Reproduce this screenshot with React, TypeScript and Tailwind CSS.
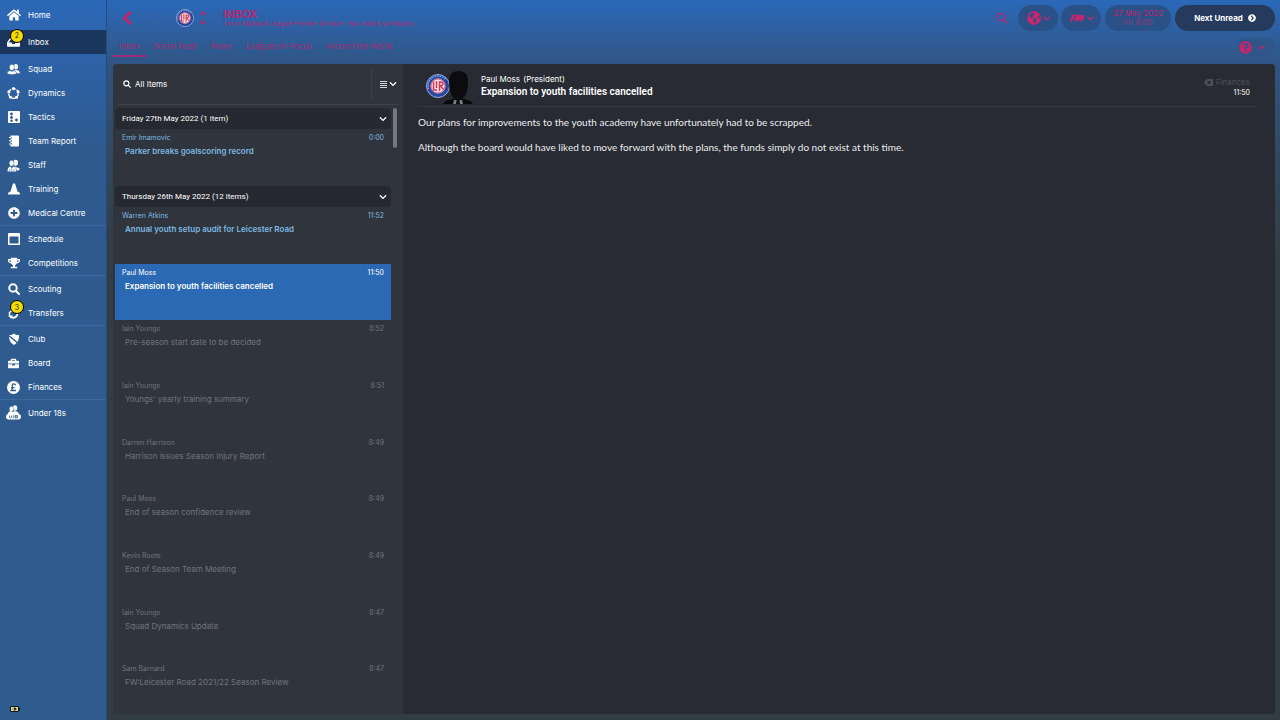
import type { ReactNode } from 'react'
import {
  FaBriefcase,
  FaChevronDown,
  FaGlobeAmericas,
  FaHome,
  FaInbox,
  FaPlusCircle,
  FaQuestionCircle,
  FaChevronCircleRight,
  FaTrophy,
} from 'react-icons/fa'

const Svg = ({ children, className = 'size-3' }: { children: ReactNode; className?: string }) => (
  <svg viewBox="0 0 24 24" className={className} fill="currentColor" aria-hidden="true">
    {children}
  </svg>
)

const Search = ({ className = 'size-3', width = 4 }: { className?: string; width?: number }) => (
  <Svg className={className}>
    <circle cx="10" cy="10" r="7.5" fill="none" stroke="currentColor" strokeWidth={width} />
    <path d="M15.5 15.5 22 22" stroke="currentColor" strokeWidth={width} strokeLinecap="round" />
  </Svg>
)

const ThinChevron = () => (
  <svg viewBox="0 0 14 9" className="h-[5px] w-[7px]" fill="none" stroke="currentColor" strokeWidth="2.500" aria-hidden="true">
    <path d="M1 1.500l6 5.500 6-5.500" />
  </svg>
)

const Squad = () => (
  <Svg className="size-[13px]">
    <ellipse cx="16.5" cy="7" rx="4" ry="5" />
    <path d="M14 13q9-1 10 6h-9z" />
    <ellipse cx="9" cy="8" rx="4.6" ry="5.8" stroke="#2d5c98" strokeWidth="1" />
    <path d="M0 20q0-5 5.500-6 3.500 3 7 0 5.500 1 5.500 6-9 3-18 0z" stroke="#2d5c98" strokeWidth="1" />
  </Svg>
)

const Dynamics = () => (
  <Svg className="size-[13px]">
    <circle cx="12" cy="12" r="9" fill="none" stroke="currentColor" strokeWidth="2.500" strokeDasharray="7.310 2" strokeDashoffset="-1" />
    <circle cx="12" cy="3" r="2.800" />
    <circle cx="3.500" cy="9" r="2.800" />
    <circle cx="20.500" cy="9" r="2.800" />
    <circle cx="6.500" cy="19" r="2.800" />
    <circle cx="17.500" cy="19" r="2.800" />
  </Svg>
)

const Tactics = () => (
  <Svg>
    <rect width="24" height="24" rx="2" />
    <g fill="#2e5a91">
      <circle cx="7" cy="6" r="2.800" />
      <circle cx="7" cy="13" r="2.800" />
      <circle cx="7" cy="19.500" r="2.500" />
      <circle cx="17" cy="18" r="2.800" />
    </g>
  </Svg>
)

const Report = () => (
  <Svg>
    <path d="M5 1h15q2 0 2 2v18q0 2-2 2H5v-4h3v-3H5v-3h3v-3H5V7h3V4H5z" />
    <path d="M2 5h5M2 11.500h5M2 18h5" stroke="currentColor" strokeWidth="2" />
  </Svg>
)

const Staff = () => (
  <Svg className="size-[13px]">
    <ellipse cx="16" cy="7" rx="4.500" ry="5.500" />
    <ellipse cx="8.500" cy="8" rx="4.500" ry="5.500" stroke="#2d5a91" />
    <path d="M1 23q0-8 5-9l3 3 3-3q5 1 5 9z" />
    <path d="M14 13l3 2q6 1 7 4l-5 3z" />
    <path d="M9 17v6M5 19v4M13 19v4" stroke="#2d5a91" />
  </Svg>
)

const Training = () => (
  <Svg>
    <path d="M10 1h4l5 16q4 1 5 4v2H0v-2q1-3 5-4z" />
  </Svg>
)

const Calendar = () => (
  <Svg>
    <path fillRule="evenodd" d="M2 0h20q2 0 2 2v20q0 2-2 2H2q-2 0-2-2V2q0-2 2-2zm1 7v14h18V7z" />
  </Svg>
)

const Transfer = () => (
  <Svg>
    <path d="M3 10v10M2 12l8-7" stroke="currentColor" strokeWidth="3" />
    <path d="M6 20q8 4 12-3 2-5-2-8" fill="none" stroke="currentColor" strokeWidth="3.500" />
    <path d="M2 17l8 0-4 7z" />
  </Svg>
)

const Shield = () => (
  <Svg>
    <path d="M2 4q6 1 10-3 4 4 10 3 1 15-10 20Q1 19 2 4z" />
    <path d="M2 5.500 19.500 20" stroke="#2f5b8e" strokeWidth="3" />
  </Svg>
)

const Pound = () => (
  <svg viewBox="0 0 24 24" className="size-[13px]" aria-hidden="true">
    <circle cx="12" cy="12" r="12" fill="#fff" />
    <path d="M16 8q-1-3-4-2.500-3 .5-2 5 .8 4-2 7h8.500M7.500 12.200h6.500" fill="none" stroke="#2f5b8e" strokeWidth="2.400" />
  </svg>
)

const Under18 = () => (
  <svg viewBox="0 0 30 32" className="h-4 w-[15px]" aria-hidden="true">
    <g fill="#fff">
      <ellipse cx="18" cy="6" rx="4.500" ry="5.500" />
      <ellipse cx="11" cy="8" rx="4.500" ry="5.500" stroke="#2f5b8e" />
      <path d="M3 20q1-7 6-8l4 2 5-2q8 1 8 8z" />
      <rect y="18" width="30" height="11" rx="5.500" />
    </g>
    <path d="M7 21v4q2 2 4 0v-4M14.500 20.500v6M18 21h5v5h-5zM18 23.500h5" fill="none" stroke="#2f5b8e" strokeWidth="1.500" />
  </svg>
)

const Crest = ({ className }: { className: string }) => (
  <svg viewBox="0 0 48 48" className={className} aria-hidden="true">
    <circle cx="24" cy="24" r="23" fill="#2747a0" stroke="#9db2e0" strokeWidth="2" />
    <path d="M5 30A20 20 0 0 1 40 12" fill="none" stroke="#7f9bdb" strokeWidth="3" strokeDasharray="3 2" />
    <circle cx="24" cy="24" r="15" fill="#f3dfe6" />
    <g fill="none" stroke="#d43a55" strokeWidth="3">
      <path d="M15 15v17h7M21 14v14M27 34V16h4q3 1 3 4t-7 4M29 24l6 7" />
      <circle cx="24" cy="24" r="14" strokeWidth="1.500" />
    </g>
  </svg>
)

const Portrait = () => (
  <svg viewBox="0 0 32 34" className="-ml-2 h-[34px] w-8" aria-hidden="true">
    <path d="M1 34q2-4 10-5h10q8 1 10 5z" fill="#08090b" />
    <path d="M12 30h8l1 4H11z" fill="#777b82" />
    <path d="M14.500 30h3l.5 4h-4z" fill="#0b0c0e" />
    <path d="M7 12Q7 1 16.500 1T26 12q0 8-3 14-3 4-6.500 4T10 26Q7 20 7 12z" fill="#0c0c0e" />
  </svg>
)

type Item = { label: string; icon: ReactNode; badge?: number; active?: boolean }

const menu: Item[][] = [
  [{ label: 'Home', icon: <FaHome className="size-[14px]" /> }],
  [{ label: 'Inbox', icon: <FaInbox className="size-[13px]" />, badge: 2, active: true }],
  [
    { label: 'Squad', icon: <Squad /> },
    { label: 'Dynamics', icon: <Dynamics /> },
    { label: 'Tactics', icon: <Tactics /> },
    { label: 'Team Report', icon: <Report /> },
    { label: 'Staff', icon: <Staff /> },
    { label: 'Training', icon: <Training /> },
    { label: 'Medical Centre', icon: <FaPlusCircle className="size-3" /> },
  ],
  [
    { label: 'Schedule', icon: <Calendar /> },
    { label: 'Competitions', icon: <FaTrophy className="size-3" /> },
  ],
  [
    { label: 'Scouting', icon: <Search /> },
    { label: 'Transfers', icon: <Transfer />, badge: 3 },
  ],
  [
    { label: 'Club', icon: <Shield /> },
    { label: 'Board', icon: <FaBriefcase className="size-[11px]" /> },
    { label: 'Finances', icon: <Pound /> },
  ],
  [{ label: 'Under 18s', icon: <Under18 /> }],
]

function Sidebar() {
  return (
    <nav className="flex w-[107px] shrink-0 flex-col border-r border-[#2b4a75] bg-linear-to-b from-[#2c68b8] via-[#2e5a90] via-20% to-[#2f5b8e] pt-[3px]">
      {menu.map((group, i) => (
        <ul key={i} className={i > 2 ? 'border-t border-[#3a689f] pt-px' : i > 0 ? 'pt-[3px]' : ''}>
          {group.map((item) => (
            <li key={item.label}>
              <a
                href="#"
                className={`flex h-6 items-center text-[8px] text-white ${item.active ? 'bg-[#1b365d]' : ''}`}
              >
                <span className="relative ml-1.5 flex w-[15px] justify-center">
                  {item.icon}
                  {item.badge && (
                    <span className="absolute -top-[7px] left-1 flex size-[14px] items-center justify-center rounded-full border-[1.5px] border-black bg-[#f5dc00] text-[7px] leading-none text-[#222]">
                      {item.badge}
                    </span>
                  )}
                </span>
                <span className="ml-[7px]">{item.label}</span>
              </a>
            </li>
          ))}
        </ul>
      ))}
      <svg viewBox="0 0 20 12" className="mt-auto mb-2 ml-2.5 h-1.5 w-2.5" aria-hidden="true">
        <rect x="1" y="1" width="16" height="10" rx="1" fill="#d5e29a" stroke="#111" strokeWidth="2" />
        <path d="M17 4h3v4h-3zM4 6h6M9 3l4 3-4 3z" fill="#111" stroke="#111" />
      </svg>
    </nav>
  )
}

const tabs = ['Inbox', 'Social Feed', 'News', 'Leagues in Focus', 'Around the World']

function Header() {
  return (
    <header className="flex h-16 shrink-0 flex-col pr-[5px] text-[#bd246e]">
      <div className="flex h-[34px] items-center pt-0.5">
        <button aria-label="Back" className="ml-[15px] text-[#cf1f63]">
          <svg viewBox="0 0 10 14" className="h-3.5 w-2.5" fill="none" stroke="currentColor" strokeWidth="2.500">
            <path d="M8.500 1 2.500 7l6 6" />
          </svg>
        </button>
        <button aria-label="Forward" disabled className="ml-6 text-[#41619b]">
          <svg viewBox="0 0 10 14" className="h-3 w-2" fill="none" stroke="currentColor" strokeWidth="1.500">
            <path d="M2 2l5 5-5 5" />
          </svg>
        </button>
        <Crest className="ml-3 size-[18px]" />
        <button aria-label="Switch club" className="ml-[5px]">
          <svg viewBox="0 0 8 14" className="h-3.5 w-2" fill="none" stroke="currentColor" strokeWidth="1.300">
            <path d="M1 4l3-3 3 3M1 10l3 3 3-3" />
          </svg>
        </button>
        <div className="ml-4">
          <h1 className="text-[11px] leading-3 font-semibold">INBOX</h1>
          <p className="font-[Roboto,sans-serif] text-[7px] leading-[9px] text-[#a8307a]">
            1st in Midland League Premier Division - No match scheduled
          </p>
        </div>
        <div className="ml-auto flex items-center">
          <button aria-label="Search" className="mr-2.5">
            <Search className="size-3" width={2.5} />
          </button>
          <button aria-label="World" className="flex h-[26px] w-10 items-center justify-center gap-0.5 rounded-full bg-[#2a5289] text-[#d0236c]">
            <FaGlobeAmericas className="size-3.5" />
            <ThinChevron />
          </button>
          <button aria-label="FM menu" className="ml-[3px] flex h-[26px] w-10 items-center justify-center gap-0.5 rounded-full bg-[#2a5289] text-[#d0236c]">
            <svg viewBox="0 0 32 16" className="h-2 w-4" fill="none" stroke="currentColor" strokeWidth="3.500">
              <path d="M3 15 8 3h6M6 9h5M12 15l6-13 1 10 6-10-1 11M25 14l5-12" />
            </svg>
            <ThinChevron />
          </button>
          <button className="ml-1 flex h-[26px] w-[66px] flex-col items-center justify-center rounded-full bg-[#2a5289] text-[8px] leading-[9px]">
            <span>27 May 2022</span>
            <span className="text-[#95347b]">Fri 8:00</span>
          </button>
          <button className="ml-1 flex h-[26px] w-[100px] items-center justify-center gap-[5px] rounded-full bg-[#253a5c] text-[8px] font-bold text-white">
            Next Unread
            <FaChevronCircleRight className="size-2" />
          </button>
        </div>
      </div>
      <div className="flex flex-1 items-start">
        <nav className="ml-1.5 flex h-[23px] text-[8px] text-[#a22d75]">
          {tabs.map((tab, i) => (
            <a
              key={tab}
              href="#"
              className={`flex items-center pt-0.5 ${i === 0 ? 'border-b-2 border-[#a02c79] px-1.5' : 'px-[7px] pb-0.5'}`}
            >
              {tab}
            </a>
          ))}
        </nav>
        <button aria-label="Help" className="mt-1 ml-auto flex h-[18px] w-[38px] items-center gap-1.5 rounded-full bg-[#30558a] pl-0.5 text-[#c5246e]">
          <FaQuestionCircle className="size-[13px]" />
          <ThinChevron />
        </button>
      </div>
    </header>
  )
}

type Mail = { from: string; time: string; subject: string; state?: 'unread' | 'selected' }

const today: Mail[] = [
  { from: 'Emir Imamovic', time: '0:00', subject: 'Parker breaks goalscoring record', state: 'unread' },
]
const yesterday: Mail[] = [
  { from: 'Warren Atkins', time: '11:52', subject: 'Annual youth setup audit for Leicester Road', state: 'unread' },
  { from: 'Paul Moss', time: '11:50', subject: 'Expansion to youth facilities cancelled', state: 'selected' },
  { from: 'Iain Youngs', time: '8:52', subject: 'Pre-season start date to be decided' },
  { from: 'Iain Youngs', time: '8:51', subject: "Youngs' yearly training summary" },
  { from: 'Darren Harrison', time: '8:49', subject: 'Harrison issues Season Injury Report' },
  { from: 'Paul Moss', time: '8:49', subject: 'End of season confidence review' },
  { from: 'Kevin Roots', time: '8:49', subject: 'End of Season Team Meeting' },
  { from: 'Iain Youngs', time: '8:47', subject: 'Squad Dynamics Update' },
  { from: 'Sam Barnard', time: '8:47', subject: 'FW:Leicester Road 2021/22 Season Review' },
]

const tone = {
  unread: 'text-[#7db9e2]',
  selected: 'bg-[#2c69b4] text-white',
  read: 'text-[#70747c]',
}

function MailRow({ mail }: { mail: Mail }) {
  return (
    <li className={`px-[7px] pt-1 ${tone[mail.state ?? 'read']}`}>
      <div className="flex justify-between text-[7px] leading-[10px]">
        <span>{mail.from}</span>
        <span>{mail.time}</span>
      </div>
      <p className={`mt-0.5 ml-[3px] text-[8px] leading-3 ${mail.state ? 'font-semibold' : ''}`}>{mail.subject}</p>
    </li>
  )
}

function GroupHeader({ children }: { children: ReactNode }) {
  return (
    <button className="flex h-[21px] w-full items-center justify-between rounded bg-[#262931] pr-1 pl-[7px] font-[Roboto,sans-serif] text-[8px] text-white">
      {children}
      <FaChevronDown className="size-2" />
    </button>
  )
}

function MailList() {
  return (
    <section className="flex w-[290px] shrink-0 flex-col bg-[#30343c]">
      <div className="mx-1 flex h-[41px] items-center border-b border-[#3d4148] pl-1.5 text-white">
        <Search className="size-2" width={3.5} />
        <span className="ml-1 text-[8px]">All Items</span>
        <button aria-label="List options" className="mr-0.5 ml-auto flex h-[30px] items-center gap-0.5 border-l border-[#3d4148] pl-2">
          <svg viewBox="0 0 7 7" className="size-[7px]" stroke="#d5d6d8">
            <path d="M0 .5h7M0 2.500h7M0 4.500h7M0 6.500h7" />
          </svg>
          <FaChevronDown className="size-2" />
        </button>
      </div>
      <div className="flex min-h-0 flex-1 overflow-hidden pt-[3px] pl-0.5">
        <div className="w-[276px]">
          <GroupHeader>Friday 27th May 2022 (1 item)</GroupHeader>
          <ul className="grid h-[57px]">
            {today.map((mail) => (
              <MailRow key={mail.subject} mail={mail} />
            ))}
          </ul>
          <GroupHeader>Thursday 26th May 2022 (12 items)</GroupHeader>
          <ul className="grid h-[510px] auto-rows-fr">
            {yesterday.map((mail) => (
              <MailRow key={mail.subject} mail={mail} />
            ))}
          </ul>
        </div>
        <div className="ml-0.5 h-10 w-1 rounded-sm bg-[#74777d]" />
      </div>
    </section>
  )
}

function Message() {
  return (
    <article className="min-w-0 flex-1 bg-[#282b33] pt-1.5 pr-[17px] pl-[15px] text-white">
      <div className="flex h-[37px] border-b border-[#343840]">
        <div className="flex w-[63px] pl-2">
          <Crest className="mt-1 size-6 shrink-0" />
          <Portrait />
        </div>
        <div className="pt-1">
          <p className="text-[8px] leading-[11px]">
            Paul Moss <span className="ml-px">(President)</span>
          </p>
          <h2 className="mt-px font-[Roboto,sans-serif] text-[10px] leading-3 font-semibold">Expansion to youth facilities cancelled</h2>
        </div>
        <div className="mr-2 ml-auto flex flex-col items-end pt-1.5">
          <span className="flex items-center gap-[3px] text-[8px] leading-3 text-[#4d5057]">
            <svg viewBox="0 0 18 14" className="h-[7px] w-[9px]" fill="currentColor">
              <path fillRule="evenodd" d="M6 0h10q2 0 2 2v10q0 2-2 2H6L0 7zm1 4v6h6V4z" />
            </svg>
            Finances
          </span>
          <time className="text-[7px] leading-[10px]">11:50</time>
        </div>
      </div>
      <div className="mt-2 space-y-[11px] font-[Lato,sans-serif] text-[10px] leading-[14px] text-[#eceded]">
        <p>Our plans for improvements to the youth academy have unfortunately had to be scrapped.</p>
        <p>Although the board would have liked to move forward with the plans, the funds simply do not exist at this time.</p>
      </div>
    </article>
  )
}

export default function App() {
  return (
    <div className="flex h-screen overflow-hidden bg-linear-to-b from-[#2b68b9] via-[#30537d] via-10% to-[#323c44] to-35% font-[Inter,sans-serif]">
      <Sidebar />
      <div className="flex min-w-0 flex-1 flex-col">
        <Header />
        <main className="mr-[5px] mb-1.5 ml-1.5 flex min-h-0 flex-1 overflow-hidden rounded">
          <MailList />
          <Message />
        </main>
      </div>
    </div>
  )
}
